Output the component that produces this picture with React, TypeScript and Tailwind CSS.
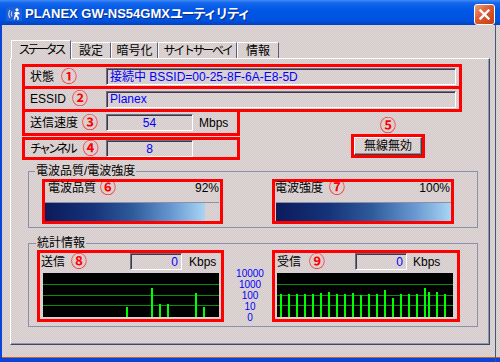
import React from "react";

const dither = "bg-[repeating-conic-gradient(#e7d6d0_0_25%,#cccbd1_0_50%)] bg-[length:2px_2px]";
const meterFill =
  "h-full bg-[linear-gradient(to_right,#0b1b5a,#16337a_30%,#2f5b9c_55%,#6a9ad2_80%,#a9d5f4)]";

const sendBars: [number, number][] = [
  [83, 34],
  [108, 15],
  [116, 31],
  [124, 31],
  [152, 20],
  [160, 34],
];

const recvTops = [21, 21, 21, 21, 21, 20, 19, 21, 21, 20, 22, 21, 21, 17, 25, 21, 21, 21, 15, 19, 19, 21];
const recvX = [3, 11, 19, 27, 35, 43, 51, 59, 67, 75, 83, 91, 99, 107, 115, 123, 131, 139, 147, 151, 159, 167];
const recvBars: [number, number][] = recvX.map((x, i) => [x, recvTops[i]]);

const tabs = [
  { label: "ステータス", w: "w-[60px]", t: "tracking-[-3px]", active: true },
  { label: "設定", w: "w-[40px]", t: "" },
  { label: "暗号化", w: "w-[47px]", t: "" },
  { label: "サイトサーベイ", w: "w-[79px]", t: "tracking-[-2.3px]" },
  { label: "情報", w: "w-[42px]", t: "" },
];

function Num({ n }: { n: string }) {
  return <span className="text-[16px] leading-none font-bold text-[#ff0000]">{n}</span>;
}

function Field({ className, children }: { className: string; children?: React.ReactNode }) {
  return (
    <div
      className={`h-[17px] flex items-center whitespace-nowrap text-[#0000ff] border border-t-[#6e6e80] border-l-[#6e6e80] border-b-white border-r-white shadow-[inset_1px_1px_0_#3a3a4c] ${className}`}
    >
      {children}
    </div>
  );
}

function Graph({ bars }: { bars: [number, number][] }) {
  return (
    <svg width="176" height="44" className="block bg-black">
      {[11, 22, 32].map((y) => (
        <line key={y} x1="0" x2="176" y1={y + 0.5} y2={y + 0.5} stroke="#0b8c0b" strokeWidth="1" />
      ))}
      {bars.map(([x, top], i) => (
        <rect key={i} x={x} y={top} width="2" height={44 - top} fill="#00ff00" />
      ))}
    </svg>
  );
}

function Meter({ pct, className }: { pct: number; className: string }) {
  return (
    <div className={`h-[19px] border-t border-[#8a90a8] ${className}`}>
      <div className={meterFill} style={{ width: `${pct}%` }} />
    </div>
  );
}

function AppIcon() {
  return (
    <svg width="16" height="14" viewBox="0 0 16 14">
      <rect x="0" y="0" width="16" height="14" rx="1" fill="#1f5fd6" />
      <path d="M4 3 Q1.5 7 4 11" stroke="#b8cffa" strokeWidth="1.2" fill="none" />
      <path d="M6 4.5 Q4.5 7 6 9.5" stroke="#b8cffa" strokeWidth="1.2" fill="none" />
      <circle cx="11" cy="2.8" r="1.6" fill="#fff" />
      <path d="M8 6 L10 4.8 L12.8 5.2 L14 7 L12.6 7.4 L12 6.6 L11.4 8.6 L13 10.4 L12.4 13 L11 12.8 L11.4 10.8 L9.8 9.6 L9 12.6 L7.6 12.4 L8.6 8.6 L9.6 6.4 L8.6 7.2 Z" fill="#fff" />
    </svg>
  );
}

export default function App() {
  return (
    <div className="w-[500px] h-[362px] overflow-hidden flex flex-col font-['Liberation_Sans','Noto_Sans_CJK_JP',sans-serif] text-[12px] text-black">
      {/* title bar */}
      <div className="h-[25px] shrink-0 flex items-start bg-[linear-gradient(to_bottom,#3f8cf8_0%,#1465ea_12%,#0058e6_40%,#0053e0_80%,#0042bf_100%)]">
        <div className="ml-[6px] mt-[7px]">
          <AppIcon />
        </div>
        <div className="ml-[3px] mt-[6px] whitespace-nowrap text-white font-bold text-[13px] leading-[16px] [text-shadow:1px_1px_0_#0a2a8a]">
          PLANEX GW-NS54GMX<span className="tracking-[-1.5px]">ユーティリティ</span>
        </div>
        <div className="ml-auto mr-[5px] mt-[4px] w-[21px] h-[21px] rounded-[3px] border border-white flex items-center justify-center bg-[linear-gradient(135deg,#eea080,#dd5a2e_45%,#c63c12)]">
          <svg width="11" height="11" viewBox="0 0 11 11">
            <path d="M1.5 1.5 L9.5 9.5 M9.5 1.5 L1.5 9.5" stroke="#fff" strokeWidth="2.4" strokeLinecap="square" />
          </svg>
        </div>
      </div>

      {/* body */}
      <div className={`flex-1 flex border-l-2 border-[#0b45d8] ${dither}`}>
        <div className="w-[493px] flex flex-col">
          {/* tabs */}
          <div className="flex items-end ml-[9px] mt-[15px] h-[18px] relative z-10">
            {tabs.map((tab) => (
              <div
                key={tab.label}
                className={`${tab.w} flex items-center justify-center whitespace-nowrap border-t border-l border-t-white border-l-white border-r border-r-[#5a5f78] ${
                  tab.active ? `h-[19px] -mb-px ${dither}` : "h-[16px]"
                }`}
              >
                <span className={tab.t}>{tab.label}</span>
              </div>
            ))}
          </div>

          {/* panel */}
          <div className="ml-[8px] w-[480px] h-[287px] border-t border-l border-white border-r border-b border-r-[#3e4866] border-b-[#3e4866] shadow-[inset_-1px_-1px_0_#9097b0]">
            {/* status / essid */}
            <div className="ml-[11px] mt-[5px] w-[440px]">
              <div className="h-[25px] border-[3px] border-[#ff0000] flex items-center pl-[5px]">
                <div className="w-[76px] flex items-center gap-[7px]">
                  <span>状態</span>
                  <Num n="①" />
                </div>
                <Field className="w-[350px] pl-[3px]">接続中 BSSID=00-25-8F-6A-E8-5D</Field>
              </div>
              <div className="-mt-[3px] h-[26px] border-[3px] border-[#ff0000] flex items-center pl-[5px]">
                <div className="w-[76px] flex items-center gap-[6px]">
                  <span>ESSID</span>
                  <Num n="②" />
                </div>
                <Field className="w-[350px] pl-[3px]">Planex</Field>
              </div>
            </div>

            {/* speed / channel / radio off */}
            <div className="ml-[11px] -mt-[3px] flex">
              <div className="w-[218px] flex flex-col">
                <div className="h-[27px] border-[3px] border-[#ff0000] flex items-center pl-[5px]">
                  <div className="w-[76px] flex items-center gap-[4px]">
                    <span>送信速度</span>
                    <Num n="③" />
                  </div>
                  <Field className="w-[87px] justify-center">54</Field>
                  <span className="ml-[6px]">Mbps</span>
                </div>
                <div className="mt-[1px] h-[23px] border-[3px] border-[#ff0000] flex items-center pl-[5px]">
                  <div className="w-[76px] flex items-center gap-[8px] whitespace-nowrap">
                    <span className="tracking-[-3px]">チャンネル</span>
                    <Num n="④" />
                  </div>
                  <Field className="w-[87px] justify-center">8</Field>
                </div>
              </div>
              <div className="ml-[111px] w-[74px] flex flex-col items-center">
                <div className="mt-[9px] h-[16px]">
                  <Num n="⑤" />
                </div>
                <div className="h-[24px] w-[74px] border-[3px] border-[#ff0000]">
                  <div className="h-full flex items-center justify-center border border-t-white border-l-white border-r-[#404040] border-b-[#404040] shadow-[inset_-1px_-1px_0_#8c8c98]">
                    無線無効
                  </div>
                </div>
              </div>
            </div>

            {/* signal group */}
            <fieldset className="ml-[17px] mt-[4px] w-[450px] border border-[#8a90a8] p-0">
              <legend className="ml-[6px] px-[1px] leading-[14px]">電波品質/電波強度</legend>
              <div className="flex pl-[13px] pt-[1px] pb-[3px]">
                <div className="w-[181px] h-[45px] border-[3px] border-[#ff0000] flex flex-col">
                  <div className="h-[12px] leading-[12px] flex items-center pl-[3px] pr-[1px]">
                    <span>電波品質</span>
                    <span className="ml-[4px]">
                      <Num n="⑥" />
                    </span>
                    <span className="ml-auto">92%</span>
                  </div>
                  <Meter pct={92} className="mt-[8px] w-[174px]" />
                </div>
                <div className="ml-[49px] w-[182px] h-[45px] border-[3px] border-[#ff0000] flex flex-col">
                  <div className="h-[12px] leading-[12px] flex items-center pr-[1px]">
                    <span>電波強度</span>
                    <span className="ml-[6px]">
                      <Num n="⑦" />
                    </span>
                    <span className="ml-auto">100%</span>
                  </div>
                  <Meter pct={100} className="mt-[8px] ml-[1px] w-[175px]" />
                </div>
              </div>
            </fieldset>

            {/* statistics group */}
            <fieldset className="ml-[17px] mt-[8px] w-[450px] border border-[#8a90a8] p-0">
              <legend className="ml-[7px] px-[1px] leading-[14px]">統計情報</legend>
              <div className="flex pl-[8px] pb-[3px]">
                <div className="w-[187px] h-[72px] border-[3px] border-[#ff0000] flex flex-col">
                  <div className="h-[17px] flex items-center">
                    <div className="w-[90px] flex items-center pl-[1px] gap-[6px]">
                      <span>送信</span>
                      <Num n="⑧" />
                    </div>
                    <Field className="w-[52px] justify-end pr-[3px]">0</Field>
                    <span className="ml-[7px]">Kbps</span>
                  </div>
                  <div className="mt-[3px] ml-[3px]">
                    <Graph bars={sendBars} />
                  </div>
                </div>

                <div className="w-[48px] flex flex-col items-center pl-[4px] pt-[18px] text-[10px] leading-[11px] text-[#0000ff]">
                  <span>10000</span>
                  <span>1000</span>
                  <span>100</span>
                  <span>10</span>
                  <span>0</span>
                </div>

                <div className="w-[188px] h-[72px] border-[3px] border-[#ff0000] flex flex-col">
                  <div className="h-[17px] flex items-center">
                    <div className="w-[80px] flex items-center pl-[2px] gap-[8px]">
                      <span>受信</span>
                      <Num n="⑨" />
                    </div>
                    <Field className="w-[52px] justify-end pr-[3px]">0</Field>
                    <span className="ml-[6px]">Kbps</span>
                  </div>
                  <div className="mt-[3px] ml-[2px]">
                    <Graph bars={recvBars} />
                  </div>
                </div>
              </div>
            </fieldset>
          </div>
          <div className="flex-1" />
          <div className="h-[5px] bg-[#0b45d8] border-t border-[#c8602c]" />
        </div>
        <div className="w-px bg-[#4a5474]" />
        <div className="flex-1 flex flex-col">
          <div className="flex-1" />
          <div className="h-[5px] bg-[#0b45d8] border-t border-[#c8602c]" />
        </div>
      </div>
    </div>
  );
}
